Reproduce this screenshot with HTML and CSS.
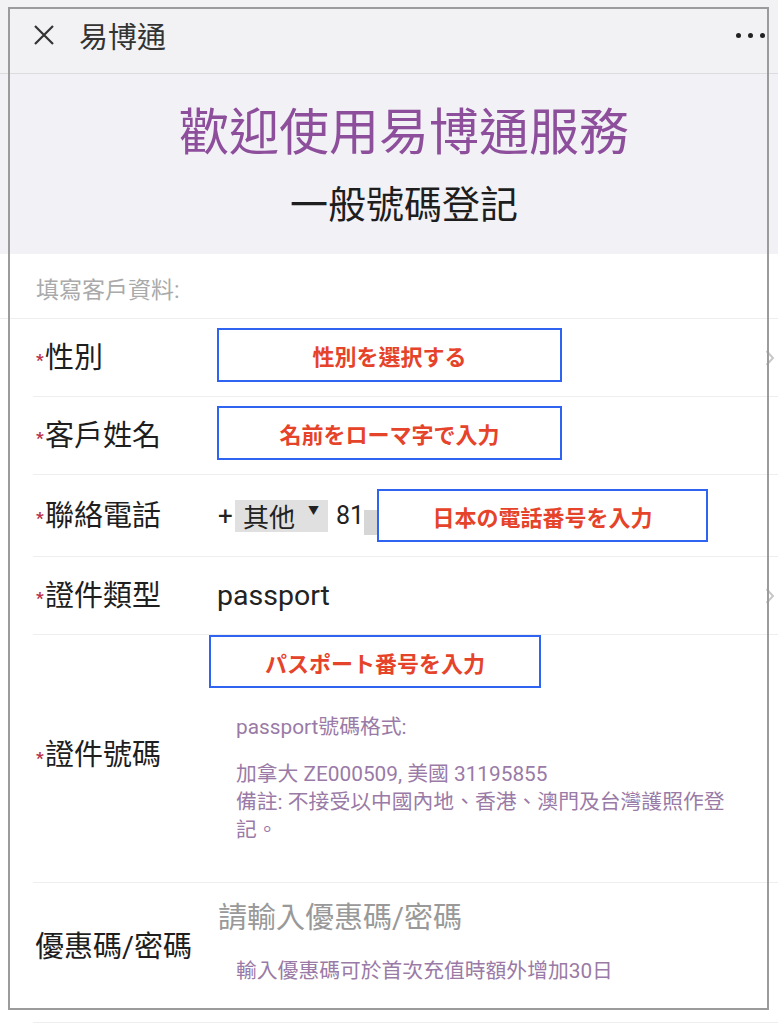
FILE: index.html
```html
<!DOCTYPE html>
<html lang="zh-Hant">
<head>
  <meta charset="UTF-8" />
  <title>易博通</title>
  <link rel="stylesheet" href="styles.css">
</head>
<body>
  <div class="app">
    <header class="topbar">
      <svg class="close" width="22" height="22" viewBox="0 0 22 22">
        <path d="M2 2 L20 20 M20 2 L2 20" stroke="#333" stroke-width="2.2" fill="none" />
      </svg>
      <span class="topbar-title">易博通</span>
      <span class="dots"><i></i><i></i><i></i></span>
    </header>

    <section class="hero">
      <h1>歡迎使用易博通服務</h1>
      <h2>一般號碼登記</h2>
    </section>

    <section class="form">
      <div class="caption">填寫客戶資料:</div>

      <div class="row">
        <div class="label"><span class="req">*</span>性別</div>
        <div class="note-box note-wide">性別を選択する</div>
        <svg class="chevron" width="10" height="18" viewBox="0 0 10 18">
          <path d="M1.5 2 L8 9 L1.5 16" stroke="#c8c8c8" stroke-width="2" fill="none" />
        </svg>
      </div>

      <div class="row">
        <div class="label"><span class="req">*</span>客戶姓名</div>
        <div class="note-box note-wide">名前をローマ字で入力</div>
      </div>

      <div class="row row-phone">
        <div class="label"><span class="req">*</span>聯絡電話</div>
        <div class="phone">
          <span class="plus">+</span>
          <span class="area">其他<span class="caret">▼</span></span>
          <span class="code">81</span>
          <span class="code-tail"></span>
          <div class="note-box note-phone">日本の電話番号を入力</div>
        </div>
      </div>

      <div class="row">
        <div class="label"><span class="req">*</span>證件類型</div>
        <div class="value">passport</div>
        <svg class="chevron" width="10" height="18" viewBox="0 0 10 18">
          <path d="M1.5 2 L8 9 L1.5 16" stroke="#c8c8c8" stroke-width="2" fill="none" />
        </svg>
      </div>

      <div class="row row-id">
        <div class="label"><span class="req">*</span>證件號碼</div>
        <div class="id-col">
          <div class="note-box note-id">パスポート番号を入力</div>
          <p class="hint hint-first">passport號碼格式:</p>
          <p class="hint">加拿大 ZE000509, 美國 31195855<br>備註: 不接受以中國內地、香港、澳門及台灣護照作登<br>記。</p>
        </div>
      </div>

      <div class="row row-promo">
        <div class="label label-plain">優惠碼/密碼</div>
        <div class="promo-col">
          <div class="placeholder">請輸入優惠碼/密碼</div>
          <p class="hint hint-promo">輸入優惠碼可於首次充值時額外增加30日</p>
        </div>
      </div>
    </section>

    <div class="frame"></div>
  </div>
</body>
</html>
```

FILE: styles.css
```css
body {
  margin: 0;
  background: #fff;
  font-family: Roboto, "Noto Sans CJK TC", sans-serif;
  color: #222;
}
.app {
  position: relative;
  width: 778px;
  height: 1024px;
  overflow: hidden;
}
.topbar {
  height: 74px;
  box-sizing: border-box;
  display: flex;
  align-items: center;
  padding: 0 13px 3px 33px;
  background: #f2f2f4;
  border-bottom: 1px solid #dcdcde;
}
.close {
  margin-right: 24px;
}
.topbar-title {
  font-size: 29px;
  color: #333;
}
.dots {
  margin-left: auto;
  display: flex;
  gap: 7px;
}
.dots i {
  width: 5px;
  height: 5px;
  border-radius: 50%;
  background: #222;
}
.hero {
  height: 180px;
  box-sizing: border-box;
  padding: 29px 0 0 30px;
  background: #f2f1f6;
  text-align: center;
}
.hero h1 {
  margin: 0;
  font-size: 50px;
  line-height: 60px;
  font-weight: 400;
  color: #8d4f9b;
}
.hero h2 {
  margin: 18px 0 0;
  font-size: 38px;
  line-height: 48px;
  font-weight: 400;
  color: #1e1e1e;
}
.caption {
  height: 65px;
  box-sizing: border-box;
  padding: 22px 0 0 36px;
  font-size: 23px;
  line-height: 30px;
  color: #aaa;
  border-bottom: 1px solid #eee;
}
.row {
  display: flex;
  align-items: center;
  margin-left: 33px;
  height: 78px;
  box-sizing: border-box;
  border-bottom: 1px solid #eee;
}
.label {
  width: 184px;
  flex: none;
  display: flex;
  align-items: center;
  padding-left: 3px;
  box-sizing: border-box;
  font-size: 29px;
  line-height: 40px;
  color: #1e1e1e;
}
.req {
  width: 9px;
  font-size: 17px;
  line-height: 17px;
  font-weight: 700;
  color: #b7334b;
  margin-top: 6px;
}
.note-box {
  box-sizing: border-box;
  border: 2px solid #2f63f1;
  background: #fff;
  display: flex;
  align-items: center;
  justify-content: center;
  font-family: Roboto, "Noto Sans CJK JP", sans-serif;
  font-size: 22px;
  font-weight: 700;
  color: #e5432a;
}
.note-wide {
  width: 345px;
  height: 54px;
  margin-top: -6px;
}
.chevron {
  margin-left: auto;
  margin-right: 3px;
}
.value {
  font-size: 28.5px;
  color: #222;
}
.row-phone {
  height: 82px;
}
.phone {
  display: flex;
  align-items: center;
  font-size: 26px;
}
.plus {
  margin-left: 1px;
  width: 17px;
}
.area {
  display: flex;
  align-items: center;
  height: 32px;
  padding: 0 9px 0 8px;
  background: #e0e0e0;
}
.caret {
  font-size: 11px;
  margin: -12px 0 0 13px;
}
.code {
  margin-left: 8px;
  font-size: 25px;
}
.code-tail {
  width: 13px;
  height: 25px;
  margin-top: 14px;
  background: #d6d6d6;
}
.note-phone {
  width: 331px;
  height: 53px;
}
.row-id {
  height: 248px;
  align-items: flex-start;
}
.row-id .label {
  margin-top: 100px;
}
.id-col {
  margin-left: -8px;
}
.note-id {
  width: 332px;
  height: 53px;
}
.hint {
  margin: 19px 0 0 27px;
  font-size: 20.8px;
  line-height: 28px;
  color: #9a7aa6;
}
.hint-first {
  margin-top: 25px;
}
.row-promo {
  height: 140px;
  align-items: flex-start;
}
.row-promo .label {
  margin-top: 44px;
}
.label-plain {
  padding-left: 2px;
}
.promo-col {
  padding-top: 17px;
}
.placeholder {
  font-size: 29px;
  line-height: 36px;
  color: #999;
  margin-left: 1px;
}
.hint-promo {
  margin: 21px 0 0 19px;
}
.frame {
  position: absolute;
  left: 8px;
  top: 7px;
  width: 761px;
  height: 1003px;
  box-sizing: border-box;
  border: 2px solid #9b9b9b;
  pointer-events: none;
}
```
